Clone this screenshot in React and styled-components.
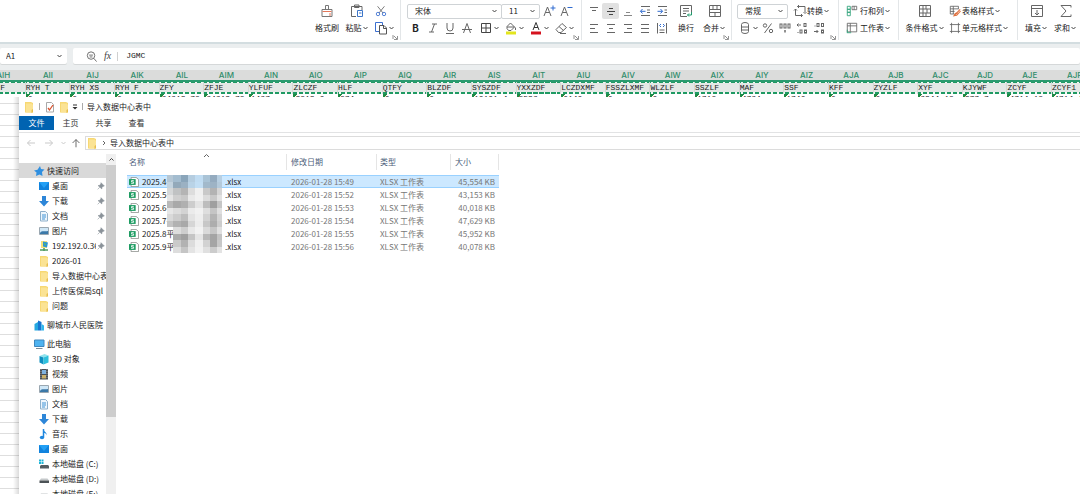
import React, { useState } from "react"
import styled, { createGlobalStyle, css } from "styled-components"

const uiFont = `"Noto Sans CJK SC", "Noto Sans", sans-serif`;

const GlobalStyle = createGlobalStyle`
    * {
        box-sizing: border-box;
    }

    body {
        margin: 0;
        background-color: #fff;
        color: #222;
        font-family: ${uiFont};
        font-size: 8px;
        line-height: 12px;
    }

    button, input, select {
        margin: 0;
        padding: 0;
        border: 0;
        background: transparent;
        color: inherit;
        font: inherit;
    }

    a {
        color: inherit;
        text-decoration: none;
    }

    svg {
        display: block;
        flex: none;
    }
`;

const Page = styled.div`
    height: 100vh;
    display: flex;
    flex-direction: column;
    overflow: hidden;
`;

/* ---------- icons ---------- */

const Line = styled.svg.attrs({ "aria-hidden": true })`
    fill: none;
    stroke: ${props => props.$color || "#666"};
    stroke-width: 1;
`;

const Chevron = () => (
    <Line width="7" height="8" viewBox="0 0 7 8" $color="#444"><path d="M1.5 3l2 2 2-2" /></Line>
);

const icons = {
    painter: <><path d="M2 5.500h10v7H2zM5.500 5.500V1.500h3v4" stroke="#777" /><path d="M2.500 7.500h9" stroke="#e5785a" /><path d="M10 9v3" stroke="#e5785a" /></>,
    paste: <><path d="M6 12.500H1.500v-10H12V6M4.500 1h4.500v2.500H4.500z" stroke="#666" /><path d="M7.500 6.500h5v6h-5z" stroke="#3d76c9" /><path d="M9 9h2.500" stroke="#3d76c9" /></>,
    cut: <><path d="M3 1.500l6.500 8M11 1.500l-6.500 8" stroke="#666" /><circle cx="3.500" cy="10.500" r="2" stroke="#3b6fd0" /><circle cx="10.500" cy="10.500" r="2" stroke="#3b6fd0" /></>,
    copy: <><path d="M5 10.500H1.500v-9h7V4" stroke="#3b6fd0" /><path d="M5.500 4.500H10l2.500 2.500v6h-7zM9.500 4.500v3h3" stroke="#555" /></>,
    fontUp: <><path d="M2 12L5.500 3 9 12M3.500 8.500h4" /><path d="M8.500 4h5M11 1.500v5" stroke="#2f6bd0" /></>,
    fontDown: <><path d="M2 12L5.500 3 9 12M3.500 8.500h4" /><path d="M8.500 3.500h5" stroke="#2f6bd0" /></>,
    italic: <path d="M6 3h5M3 11h5M8.500 3l-3 8" />,
    underline: <path d="M4 2v5a3 3 0 0 0 6 0V2M3 12.500h8" />,
    strike: <path d="M3.500 12L7 2.500l3.500 9.500M2 8.500h10" />,
    border: <path d="M2.500 2.500h9v9h-9zM7 2.500v9M2.500 7h9" stroke="#444" />,
    fill: <><path d="M3 5.500L6.500 2l4 4-3.500 3.500H4.500L3 7.500zM3 6h7.500M11.500 6.500v2.500" /><path d="M2 12h10" stroke="#e3e51d" strokeWidth="3" /></>,
    color: <><path d="M4 9L7 1.500 10 9M5 6.500h4" stroke="#333" /><path d="M2 12h10" stroke="#d5121e" strokeWidth="3" /></>,
    eraser: <path d="M2 8.500L8 2.500l4.500 4-5.500 5H4.500zM5 5.500l4.500 4M6 12.500h6" />,
    top: <path d="M3 3.500h8M5 6.500h4" />,
    middle: <path d="M5 4.500h4M3 7.500h8M5 10.500h4" stroke="#444" />,
    bottom: <path d="M5 8.500h4M3 11.500h8" stroke="#888" />,
    outdent: <><path d="M3 2.500h9M9 6h3M9 8.500h3M3 11.500h9" /><path d="M7.500 7.300H2.500M4.500 5L2.500 7.300l2 2.200" stroke="#2f6bd0" /></>,
    indent: <><path d="M3 2.500h9M9.500 6H12M9.500 8.500H12M3 11.500h9" /><path d="M2.500 7.300h5M5.500 5l2 2.300-2 2.200" stroke="#2f6bd0" /></>,
    left: <path d="M3 3.500h8M3 7.500h5M3 11.500h8" />,
    center: <path d="M3 3.500h8M5 7.500h4M3 11.500h8" />,
    right: <path d="M3 3.500h8M6 7.500h5M3 11.500h8" />,
    justify: <path d="M3 3.500h8M3 7.500h8M3 11.500h8" />,
    spread: <><path d="M2.500 2v10.500M11.500 2v10.500M4.500 11.500h5M4.500 9h5" /><path d="M6 3L4.500 4.500 6 6M8 3l1.500 1.500L8 6" stroke="#2f6bd0" /></>,
    wrap: <><path d="M8 12.500H1.500v-11h11V8M4 4.500h6M4 7h6M4 9.500h3" /><path d="M12.500 8v3H8.500M10 9.500L8.500 11l1.500 1.500" stroke="#1f9a6c" /></>,
    merge: <path d="M1.500 1.500h11v11h-11zM1.500 5.500h11M1.500 8.500h11M5 1.500v4M9 1.500v4M7 8.500v4" />,
    convert: <><path d="M4.500 2.500h7.500V8M9.500 11.500H2.500V5" /><path d="M1 6.500L2.500 5 4 6.500M10.500 8L12 9.500 13.500 8M6 1L4.500 2.500 6 4M8 10l1.500 1.500L8 13" /></>,
    stack: <><path d="M3.500 3.500a3.500 2 0 0 1 7 0v7a3.500 2 0 0 1-7 0zM3.500 6h7M3.500 9h7" /></>,
    percent: <><path d="M10.500 2.500l-7 9.500" /><circle cx="4" cy="4.500" r="1.700" /><circle cx="10" cy="10" r="1.700" /></>,
    thousand: <><rect x="2" y="3" width="2" height="4" /><rect x="6" y="3" width="2" height="4" /><rect x="10" y="3" width="2" height="4" /><path d="M7 9v2.500" stroke="#222" /></>,
    decimalUp: <><path d="M6 4H2M3.500 2.500L2 4l1.500 1.500" /><rect x="9" y="2.500" width="2" height="3" /><rect x="5" y="9" width="2" height="3" /><rect x="9.500" y="9" width="2" height="3" /><path d="M3 11v1" /></>,
    decimalDown: <><rect x="5" y="2.500" width="2" height="3" /><rect x="9.500" y="2.500" width="2" height="3" /><path d="M3 4.500v1M2 10.500h4M4.500 9L6 10.500 4.500 12" /><rect x="9.500" y="9" width="2" height="3" /></>,
    rowCol: <><path d="M1.500 1.500h3.500V5H1.500zM1.500 5h3.500v3.500H1.500zM1.500 8.500h3.500v4H1.500z" stroke="#2ba178" /><path d="M7 1.500h5.500v4H7zM9.500 1.500v4" /></>,
    sheet: <><path d="M1.500 1.500h11v10H1.500zM1.500 4.500h11M5 1.500v10" /><path d="M1 12.500h5M1.500 9v3.500" stroke="#2ba178" /></>,
    condition: <path d="M1.500 1.500h11v11h-11zM1.500 5h11M1.500 9h11M5 1.500v11M9 5v4M8 1.500V5M8 9v3.500" />,
    tableStyle: <><path d="M6 10.500H1.500v-9h9.500V5M1.500 4.500h9M1.500 7.500h5M5 1.500v9" /><path d="M13 5l-5.500 6-1.500 1.500 3-.5 4.500-5M6 12.500c1-4 4-4 3.500-1" stroke="#e0713f" strokeWidth="1.300" /></>,
    cellStyle: <path d="M3 1v12M11 1v12M1 3h12M1 11h12" />,
    fillDown: <path d="M1.500 1.500h11v11h-11zM1.500 4.500h11M7 6v5M5 9l2 2 2-2" />,
    sum: <path d="M12 3.500v-2H2l5 5.500-5 5.500h10v-2" />,
    zoomOut: <><circle cx="6.500" cy="6" r="4" /><path d="M9.500 9l3 3.500M4.500 5.500h4M5 7.500h3" /></>,
    back: <path d="M11 7H3.500M6.500 4l-3 3 3 3" stroke="#c9c9c9" />,
    forward: <path d="M3 7h7.500M7.500 4l3 3-3 3" stroke="#c9c9c9" />,
    up: <path d="M7 12V3M3 7l4-4 4 4" stroke="#555" />,
};

const Icon = ({ name, size = 14 }) => (
    <Line width={size} height={size} viewBox="0 0 14 14">{icons[name]}</Line>
);

const drawings = {
    folder: <><path d="M2 1h6l2 1v9.500H2z" fill="#f7d873" /><path d="M3 2.500h5.500L10 4v7.500H3z" fill="#fbe394" /><path d="M8.500 9v3L10 11V8z" fill="#e7bd4d" /></>,
    check: <><path d="M2.500 1.500h5l2 2v7.500h-7z" fill="#fff" stroke="#a9a9a9" /><path d="M4 7l1.500 2L9 4" fill="none" stroke="#d9532f" strokeWidth="1.300" /></>,
    star: <path d="M7 1l1 3 3.500.5-2.500 2.500.5 4-3-1.500L3 11l.5-3.500L1 5.500l3.500-.8z" fill="#2f8fe0" />,
    desktop: <><path d="M1 2h10v8H1z" fill="#1183dd" /><path d="M1 2h10L6 8z" fill="#23a0f5" /></>,
    download: <path d="M4 1h4v5h3l-5 5.500L1 6h3z" fill="#2d86d8" />,
    doc: <><path d="M2.500 1.500h5l2 2v7.500h-7z" fill="#eef6fc" stroke="#8eb0cb" /><path d="M4 5h4M4 7h4M4 9h3" stroke="#3f93d6" fill="none" /></>,
    picture: <><path d="M1.500 2.500h9v7h-9z" fill="#cfe7f7" stroke="#9aa7b0" /><path d="M2 8c2-3 4-1 8-2v3H2z" fill="#3b78a8" /></>,
    network: <><path d="M3 1h6v7H3z" fill="#f5e27a" /><path d="M5 1.500l5 1-1 5-4-1z" fill="#2a95d5" /><path d="M6 3l2 1-1 2z" fill="#6dc24b" /><path d="M2 10h8M6 8v3" stroke="#4f9b62" strokeWidth="1.500" /></>,
    building: <><path d="M1.500 5L5 3v8.500H1.500z" fill="#25a8e0" /><path d="M5 1.500L8.500 3v8.500H5z" fill="#1775d1" /><path d="M8.500 5L11 6.500v5H8.500z" fill="#2fb7ec" /></>,
    computer: <><path d="M1.500 2h9.500v6.500H1.500z" fill="#4fb3f0" stroke="#3f87bd" /><path d="M3 10.500h6.500" stroke="#7b8b96" /></>,
    cube: <><path d="M1.500 3L6.500 1l4 1.500-5 2z" fill="#8fe3ee" /><path d="M1.500 3l4 1.500v7l-4-2z" fill="#0f8fc0" /><path d="M5.500 4.500l5-2v7l-5 2z" fill="#2fc0dc" /></>,
    video: <><path d="M2 1h8v10.500H2z" fill="#4a4f55" /><path d="M4 2h4v4H4z" fill="#7fb2e0" /><path d="M4 7h4v3.500H4z" fill="#c9b06a" /><path d="M3 1v10.500M9 1v10.500" stroke="#c7c7c7" strokeWidth=".6" strokeDasharray="1 1" /></>,
    music: <><path d="M5.500 1v8" stroke="#1f87df" strokeWidth="1.500" /><path d="M5.500 1c0 3 4 3 3 6.500C8.500 5.500 7 5 5.500 5z" fill="#1f87df" /><ellipse cx="4" cy="9.500" rx="2.200" ry="1.700" fill="#1f87df" /></>,
    systemDisk: <><path d="M2 8l1-1h7l1 1v2.500H2z" fill="#555d62" /><path d="M1 1.500h2v2H1zM3.500 1.500h2v2h-2zM1 4h2v2H1zM3.500 4h2v2h-2z" fill="#1fb5d8" /></>,
    disk: <><path d="M1.500 7.500L3 5.500h6.500l1.500 2z" fill="#c4c8ca" /><path d="M1.500 7.500H11V10H1.500z" fill="#4c5256" /></>,
    pin: <path d="M6 2l4 4-1.500.3L7 8v1.500L2.500 5.500H4L5.800 3.500zM4.500 7.500L2 10" fill="#8a9299" stroke="#8a9299" strokeWidth=".7" />,
    xlsx: <><path d="M2.500.5h6l3 2.500v8.500h-9z" fill="#fff" stroke="#8a8f8c" /><path d="M0 2.500h8v7H0z" fill="#1d9c62" /><path d="M5.700 4.300H3v1.600h2.500v1.700H2.500" fill="none" stroke="#fff" /></>,
};

const Drawing = ({ name, size = 12 }) => (
    <svg aria-hidden="true" width={size} height={size} viewBox="0 0 12 12">{drawings[name]}</svg>
);

/* ---------- ribbon ---------- */

const Ribbon = styled.header`
    flex: none;
    height: 44px;
    display: flex;
    padding-left: 308px;
    background-color: #fff;
    border-bottom: 2px solid #d3dde0;
`;

const Group = styled.section`
    position: relative;
    flex: none;
    display: flex;
    height: 40px;
    padding: 3px ${props => props.$right || 0}px 0 ${props => props.$left || 0}px;
    border-right: 1px solid #e3e6e8;

    &:last-child {
        border-right: 0;
    }
`;

const GroupCorner = styled.svg`
    position: absolute;
    right: 2px;
    bottom: 0;
`;

const Rows = styled.div`
    display: flex;
    flex-direction: column;
    gap: 1px;
`;

const Row = styled.div`
    display: flex;
    align-items: center;
    height: 16px;
`;

const BigButton = styled.button`
    width: ${props => props.$width}px;
    height: 33px;
    display: flex;
    flex-direction: column;
    align-items: center;
    gap: 4px;
    padding-top: 1px;
    white-space: nowrap;
`;

const ToolLabel = styled.span`
    display: flex;
    align-items: center;
`;

const ToolButton = styled.button`
    width: 17px;
    height: 16px;
    display: flex;
    align-items: center;
    justify-content: center;
    font-size: 10px;
    font-weight: bold;
    border-radius: 2px;
    background-color: ${props => props.$active ? "#e1e1e1" : "transparent"};
`;

const MenuButton = styled.button`
    height: 16px;
    display: flex;
    align-items: center;
    gap: ${props => props.$gap || 0}px;
    padding-left: ${props => props.$left || 0}px;
    white-space: nowrap;
`;

const SelectBox = styled.label`
    position: relative;
    width: ${props => props.$width}px;
    height: 15px;
    display: flex;
    align-items: center;
    border: 1px solid #cfd3d6;
    border-radius: 2px;

    & + & {
        margin-left: -1px;
    }

    svg {
        position: absolute;
        right: 3px;
        pointer-events: none;
    }
`;

const Select = styled.select`
    appearance: none;
    width: 100%;
    height: 13px;
    padding-left: 7px;
    outline: none;
`;

const Corner = () => (
    <GroupCorner width="6" height="6" viewBox="0 0 6 6" fill="none" stroke="#777" aria-hidden="true">
        <path d="M1 1v4M2 2l3 3M5.500 2v3.500H2" strokeWidth=".8" />
    </GroupCorner>
);

const Picker = ({ label, width, options }) => {
    const [value, setValue] = useState(options[0]);

    return (
        <SelectBox $width={width}>
            <Select aria-label={label} value={value} onChange={e => setValue(e.target.value)}>
                {options.map(o => <option key={o}>{o}</option>)}
            </Select>
            <Chevron />
        </SelectBox>
    )
};

const Big = ({ icon, text, width, menu }) => (
    <BigButton $width={width}>
        <Icon name={icon} />
        <ToolLabel>{text}{menu && <Chevron />}</ToolLabel>
    </BigButton>
);

const Tools = ({ names, active }) => names.map(n => (
    <ToolButton key={n} aria-label={n} $active={n === active}><Icon name={n} /></ToolButton>
));

const Menu = ({ icon, text, left, gap, size }) => (
    <MenuButton aria-label={text || icon} $left={left} $gap={gap}>
        <Icon name={icon} size={size} />
        <ToolLabel>{text}<Chevron /></ToolLabel>
    </MenuButton>
);

const RibbonBar = () => (
    <Ribbon>
        <Group $left={4} $right={5}>
            <Big icon="painter" text="格式刷" width={30} />
            <Big icon="paste" text="粘贴" width={30} menu />
            <Rows>
                <Row><ToolButton aria-label="剪切"><Icon name="cut" size={12} /></ToolButton></Row>
                <Row><Menu icon="copy" left={2} /></Row>
            </Rows>
            <Corner />
        </Group>
        <Group $left={6} $right={6}>
            <Rows>
                <Row>
                    <Picker label="字体" width={95} options={["宋体", "黑体", "楷体"]} />
                    <Picker label="字号" width={39} options={["11", "12", "14"]} />
                    <ToolButton aria-label="增大字号"><Icon name="fontUp" /></ToolButton>
                    <ToolButton aria-label="减小字号"><Icon name="fontDown" /></ToolButton>
                </Row>
                <Row>
                    <ToolButton aria-label="加粗">B</ToolButton>
                    <Tools names={["italic", "underline", "strike"]} />
                    <Menu icon="border" left={4} />
                    <Menu icon="fill" left={4} />
                    <Menu icon="color" left={4} />
                    <Menu icon="eraser" left={4} />
                </Row>
            </Rows>
            <Corner />
        </Group>
        <Group $left={3} $right={4}>
            <Rows>
                <Row><Tools names={["top", "middle", "bottom", "outdent", "indent"]} active="middle" /></Row>
                <Row><Tools names={["left", "center", "right", "justify", "spread"]} /></Row>
            </Rows>
            <Big icon="wrap" text="换行" width={32} />
            <Big icon="merge" text="合并" width={25} menu />
            <Corner />
        </Group>
        <Group $left={5} $right={8}>
            <Rows>
                <Row>
                    <Picker label="数字格式" width={51} options={["常规", "数值", "货币"]} />
                    <Menu icon="convert" text="转换" left={5} />
                </Row>
                <Row>
                    <Menu icon="stack" left={1} />
                    <Tools names={["percent", "thousand", "decimalUp", "decimalDown"]} />
                </Row>
            </Rows>
            <Corner />
        </Group>
        <Group $left={7} $right={7}>
            <Rows>
                <Row><Menu icon="rowCol" text="行和列" size={12} gap={2} /></Row>
                <Row><Menu icon="sheet" text="工作表" size={12} gap={2} /></Row>
            </Rows>
        </Group>
        <Group $left={6} $right={8}>
            <Big icon="condition" text="条件格式" width={40} menu />
            <Rows>
                <Row><Menu icon="tableStyle" text="表格样式" size={12} gap={1} left={4} /></Row>
                <Row><Menu icon="cellStyle" text="单元格样式" size={12} gap={1} left={4} /></Row>
            </Rows>
        </Group>
        <Group $left={4}>
            <Big icon="fillDown" text="填充" width={29} menu />
            <Big icon="sum" text="求和" width={29} menu />
        </Group>
    </Ribbon>
);

/* ---------- formula bar and sheet ---------- */

const FormulaBar = styled.div`
    flex: none;
    display: flex;
    gap: 6px;
    height: 26px;
    padding: 4px 0 6px;
    background-color: #ebeeef;
`;

const Field = styled.label`
    display: flex;
    align-items: center;
    gap: 6px;
    height: 16px;
    padding: 0 4px;
    background-color: #fff;
    border-radius: 2px;
    box-shadow: 0 1px 0 #d5d8d9;
`;

const NameField = styled(Field)`
    width: 67px;
`;

const ContentField = styled(Field)`
    flex: 1;
    padding-left: 12px;
`;

const FieldInput = styled.input.attrs({ type: "text" })`
    width: 100%;
    min-width: 0;
    padding-left: 2px;
    outline: none;
    font-family: ${props => props.$mono ? `"Liberation Mono", monospace` : "inherit"};
`;

const FieldBar = styled.span`
    width: 1px;
    height: 9px;
    background-color: #d0d0d0;
`;

const Fx = styled.em`
    font: italic 10px/12px "Liberation Serif", serif;
    color: #444;
`;

const SheetTop = styled.div`
    flex: none;
    height: 27px;
    overflow: hidden;
`;

const SheetTable = styled.table`
    width: calc(100% + 36px);
    margin-left: -19px;
    table-layout: fixed;
    border-collapse: separate;
    border-spacing: 0;

    th, td {
        padding: 0;
        white-space: nowrap;
    }
`;

const ColumnHead = styled.th`
    height: 12px;
    background-color: #dbdcdb;
    border-bottom: 2px solid #2a9b70;
    color: #2f8c6a;
    font: 500 8px/10px Inter, sans-serif;
    text-align: center;
`;

const SelectedRow = styled.tr`
    background-color: #e4e8e6;
    background-image:
        repeating-linear-gradient(90deg, #1f9a63 0 4px, #f3f8f5 4px 6px),
        repeating-linear-gradient(90deg, #1f9a63 0 4px, #f3f8f5 4px 6px);
    background-size: 100% 1px, 100% 2px;
    background-position: 0 0, 0 100%;
    background-repeat: no-repeat;
`;

const cellStyles = css`
    padding: 0;
    overflow: hidden;
    color: #222;
    font: 8px/10px "Liberation Mono", monospace;
`;

const Cell = styled.td`
    ${cellStyles};
    height: 12px;
    border-right: 1px solid #d5d9d7;
`;

const ValueCell = styled.td`
    ${cellStyles};
    background: linear-gradient(135deg, #1f8a45 0 3px, transparent 3px);
    text-indent: 2px;
`;

const columns = [
    ["AIH", "RYH_F", ""], ["AII", "RYH_T", "0"], ["AIJ", "RYH_XS", "0"], ["AIK", "RYH_F", "0"],
    ["AIL", "ZFY", "24213.78"], ["AIM", "ZFJE", "24213.78"], ["AIN", "YLFUF", "1427"], ["AIO", "ZLCZF", "3813.6"],
    ["AIP", "HLF", "874"], ["AIQ", "QTFY", "0"], ["AIR", "BLZDF", "0"], ["AIS", "SYSZDF", "10101.4"],
    ["AIT", "YXXZDF", "5532"], ["AIU", "LCZDXMF", "0140"], ["AIV", "FSSZLXMF", "0"], ["AIW", "WLZLF", "0"],
    ["AIX", "SSZLF", "1718"], ["AIY", "MAF", "4724"], ["AIZ", "SSF", "1740"], ["AJA", "KFF", "0"],
    ["AJB", "ZYZLF", "0"], ["AJC", "XYF", "2344.18"], ["AJD", "KJYWF", "377.7"], ["AJE", "ZCYF", "4714.18"],
    ["AJF", "ZCYF1", "4714.18"],
];

const Sheet = () => (
    <SheetTop>
        <SheetTable>
            <thead>
                <tr>{columns.map(c => <ColumnHead key={c[0]}>{c[0]}</ColumnHead>)}</tr>
            </thead>
            <tbody>
                <SelectedRow>{columns.map(c => <Cell key={c[0]}>{c[1].replace("_", " ")}</Cell>)}</SelectedRow>
                <tr>{columns.map(c => <ValueCell key={c[0]}>{c[2]}</ValueCell>)}</tr>
            </tbody>
        </SheetTable>
    </SheetTop>
);

/* ---------- explorer ---------- */

const Workspace = styled.div`
    flex: 1;
    min-height: 0;
    display: flex;
`;

const SheetEdge = styled.div`
    width: 19px;
    background-image:
        linear-gradient(90deg, transparent 13px, rgba(0, 0, 0, 0.14)),
        repeating-linear-gradient(#fff 0 6px, #dedede 6px 7px, #fff 7px 11px);
`;

const Explorer = styled.main`
    flex: 1;
    min-width: 0;
    display: flex;
    flex-direction: column;
    background-color: #fff;
`;

const TitleBar = styled.div`
    flex: none;
    display: flex;
    align-items: center;
    gap: 2px;
    height: 19px;
    padding-left: 4px;
`;

const TitleMark = styled.span`
    width: 1px;
    height: 7px;
    margin: 0 2px;
    background-color: #aaa;
`;

const Tabs = styled.nav`
    flex: none;
    display: flex;
    height: 17px;
    border-bottom: 1px solid #e2e3e4;
`;

const Tab = styled.button`
    width: ${props => props.$active ? 35 : 33}px;
    height: 14px;
    background-color: ${props => props.$active ? "#0063b1" : "transparent"};
    color: ${props => props.$active ? "#fff" : "#333"};
`;

const AddressRow = styled.div`
    flex: none;
    display: flex;
    align-items: center;
    gap: 4px;
    height: 20px;
    padding-left: 5px;
`;

const NavButton = styled.button`
    width: ${props => props.$width || 14}px;
    height: 14px;
    display: flex;
    align-items: center;
    justify-content: center;
`;

const Address = styled.div`
    flex: 1;
    display: flex;
    align-items: center;
    gap: 2px;
    height: 14px;
    border: 1px solid #dcdcdc;
    border-right: 0;
`;

const Body = styled.div`
    flex: 1;
    min-height: 0;
    display: flex;
`;

const Sidebar = styled.nav`
    width: 87px;
    padding-top: 10px;
    overflow: hidden;
`;

const NavGroup = styled.ul`
    margin: 0 0 4px;
    padding: 0;
    list-style: none;
`;

const NavItem = styled.li`
    height: 15px;
    padding-left: ${props => props.$top ? 14 : 19}px;
    background-color: ${props => props.$active ? "#d9d9d9" : "transparent"};
`;

const NavLink = styled.a`
    display: flex;
    align-items: center;
    height: 15px;
    white-space: nowrap;
`;

const NavText = styled.span`
    flex: 1;
    min-width: 0;
    margin-left: 2px;
    overflow: hidden;
`;

const Scroll = styled.div`
    width: 10px;
    display: flex;
    flex-direction: column;
    margin-top: 1px;
    background-color: #f0f0f0;
`;

const ScrollButton = styled.button`
    height: 11px;
    display: flex;
    align-items: center;
    justify-content: center;
`;

const ScrollThumb = styled.div`
    height: 74%;
    background-color: #cdcdcd;
`;

const Files = styled.div`
    flex: 1;
    padding: 1px 0 0 11px;
`;

const FileTable = styled.table`
    width: 372px;
    table-layout: fixed;
    border-collapse: separate;
    border-spacing: 0;
`;

const FileHead = styled.th`
    position: relative;
    width: ${props => props.$width}px;
    height: 21px;
    padding: 0 0 5px;
    color: #4c607a;
    font-weight: normal;
    text-align: left;
`;

const HeadText = styled.div`
    padding-left: ${props => props.$left}px;
    border-right: 1px solid #e5e5e5;
    line-height: 16px;
`;

const SortMark = styled(Line)`
    position: absolute;
    top: -1px;
    left: 76px;
`;

const FileCell = styled.td`
    height: 13px;
    padding: 0 4px 0 ${props => props.$left || 0}px;
    color: ${props => props.$name ? "#222" : "#777"};
    text-align: ${props => props.$end ? "right" : "left"};
    line-height: 11px;
    white-space: nowrap;
    border: 0 solid #99d1ff;
`;

const FileRow = styled.tr`
    background-color: ${props => props.$active ? "#cce8ff" : "transparent"};

    ${FileCell} {
        border-top-width: ${props => props.$active ? 1 : 0}px;
        border-bottom-width: ${props => props.$active ? 1 : 0}px;
    }
`;

const FileName = styled.span`
    display: flex;
    align-items: center;
    height: 11px;
`;

const NameStart = styled.span`
    position: relative;
    width: 86px;
    padding-left: 3px;
`;

const Mosaic = styled.svg`
    position: absolute;
    top: -1px;
    left: 28px;
`;

const quickItems = [
    ["desktop", "桌面", true], ["download", "下载", true], ["doc", "文档", true], ["picture", "图片", true],
    ["network", "192.192.0.36", true], ["folder", "2026-01"], ["folder", "导入数据中心表中"],
    ["folder", "上传医保局sql"], ["folder", "问题"],
];

const computerItems = [
    ["cube", "3D 对象"], ["video", "视频"], ["picture", "图片"], ["doc", "文档"], ["download", "下载"],
    ["music", "音乐"], ["desktop", "桌面"], ["systemDisk", "本地磁盘 (C:)"], ["disk", "本地磁盘 (D:)"],
    ["disk", "本地磁盘 (E:)"],
];

// two lines of shades for each file, every shade is one block of the mosaic
const files = [
    ["2025.4平", "15:49", "45,554 KB", ["#b4c6d4", "#a3bccf", "#8aa5ba", "#b5cde0", "#c0dcf2", "#a9c3d6", "#94abbf", "#b7cfe2"], ["#c3d3df", "#93a9ba", "#9bb1c3", "#b9d3e7", "#c2def4", "#a2b9cb", "#9db3c5", "#b4cadb"]],
    ["2025.5平", "15:52", "43,153 KB", ["#d5d7d8", "#c0c2c3", "#b4b4b4", "#dddddd", "#f0f0f0", "#c9c9c9", "#b3b3b3", "#d5d5d5"], ["#e5e5e5", "#cfcfcf", "#c8c8c8", "#e9e9e9", "#f1f1f1", "#dcdcdc", "#c9c9c9", "#e2e2e2"]],
    ["2025.6平", "15:53", "40,018 KB", ["#b9b9b9", "#a9a9a9", "#b0b0b0", "#cdcdcd", "#e4e4e4", "#bdbdbd", "#9f9f9f", "#c6c6c6"], ["#e6e6e6", "#dcdcdc", "#d3d3d3", "#ebebeb", "#f1f1f1", "#dedede", "#c5c5c5", "#dfdfdf"]],
    ["2025.7平", "15:54", "47,629 KB", ["#d9d9d9", "#cccccc", "#bdbdbd", "#e3e3e3", "#eeeeee", "#d2d2d2", "#b4b4b4", "#d3d3d3"], ["#c4c4c4", "#b2b2b2", "#a9a9a9", "#d6d6d6", "#ececec", "#c7c7c7", "#adadad", "#cdcdcd"]],
    ["2025.8平", "15:55", "45,952 KB", ["none", "#dddddd", "#cecece", "#e8e8e8", "#f2f2f2", "#dadada", "#c6c6c6", "#e0e0e0"], ["none", "#ababab", "#a0a0a0", "#c5c5c5", "#e5e5e5", "#b8b8b8", "#a4a4a4", "#c3c3c3"]],
    ["2025.9平", "15:56", "40,078 KB", ["none", "#cacaca", "#b2b2b2", "#dcdcdc", "#f0f0f0", "#d2d2d2", "#a5a5a5", "#c8c8c8"], ["none", "#dddddd", "#c5c5c5", "#e4e4e4", "#f2f2f2", "#e0e0e0", "#cccccc", "#e3e3e3"]],
];

const xs = [0, 6, 14, 21, 28, 36, 43, 50, 55];

const Blocks = ({ rows }) => (
    <Mosaic width="55" height="13" viewBox="0 0 55 13" aria-hidden="true">
        {rows.map((row, y) => row.map((shade, x) => (
            <rect key={`${x}-${y}`} x={xs[x]} y={y * 7} width={xs[x + 1] - xs[x]} height="7" fill={shade} />
        )))}
    </Mosaic>
);

const NavEntry = ({ icon, text, pinned, top, active }) => (
    <NavItem $top={top} $active={active}>
        <NavLink href="#">
            <Drawing name={icon} />
            <NavText>{text}</NavText>
            {pinned && <Drawing name="pin" size={10} />}
        </NavLink>
    </NavItem>
);

const FileList = () => (
    <Files>
        <FileTable>
            <thead>
                <tr>
                    <FileHead $width={160}>
                        <HeadText $left={2}>名称</HeadText>
                        <SortMark width="7" height="5" viewBox="0 0 7 5"><path d="M1 4l2.500-2.500L6 4" /></SortMark>
                    </FileHead>
                    <FileHead $width={90}><HeadText $left={4}>修改日期</HeadText></FileHead>
                    <FileHead $width={74}><HeadText $left={3}>类型</HeadText></FileHead>
                    <FileHead $width={48}><HeadText $left={4}>大小</HeadText></FileHead>
                </tr>
            </thead>
            <tbody>
                {files.map(([name, time, size, upper, lower], i) => (
                    <FileRow key={name} $active={i === 0}>
                        <FileCell $name $left={2}>
                            <FileName>
                                <Drawing name="xlsx" size={10} />
                                <NameStart>{name}<Blocks rows={[upper, lower]} /></NameStart>
                                .xlsx
                            </FileName>
                        </FileCell>
                        <FileCell $left={4}>2026-01-28 {time}</FileCell>
                        <FileCell $left={3}>XLSX 工作表</FileCell>
                        <FileCell $end>{size}</FileCell>
                    </FileRow>
                ))}
            </tbody>
        </FileTable>
    </Files>
);

const ExplorerWindow = () => (
    <Explorer>
        <TitleBar>
            <Drawing name="folder" />
            <TitleMark />
            <Drawing name="check" />
            <Drawing name="folder" />
            <svg width="6" height="8" viewBox="0 0 6 8" fill="#333" aria-hidden="true"><path d="M1 1.500h4v1H1zM.5 4h5L3 6.500z" /></svg>
            <TitleMark />
            导入数据中心表中
        </TitleBar>
        <Tabs>
            {["文件", "主页", "共享", "查看"].map((t, i) => <Tab key={t} $active={i === 0}>{t}</Tab>)}
        </Tabs>
        <AddressRow>
            <NavButton aria-label="后退"><Icon name="back" /></NavButton>
            <NavButton aria-label="前进"><Icon name="forward" /></NavButton>
            <NavButton aria-label="最近" $width={7}>
                <Line width="7" height="8" viewBox="0 0 7 8" $color="#ccc"><path d="M1.500 3l2 2 2-2" /></Line>
            </NavButton>
            <NavButton aria-label="向上" $width={10}><Icon name="up" size={12} /></NavButton>
            <Address>
                <Drawing name="folder" />
                <Line width="8" height="8" viewBox="0 0 8 8"><path d="M3 2l2 2-2 2" /></Line>
                导入数据中心表中
            </Address>
        </AddressRow>
        <Body>
            <Sidebar>
                <NavGroup>
                    <NavEntry icon="star" text="快速访问" top active />
                    {quickItems.map(([icon, text, pinned]) => <NavEntry key={text} icon={icon} text={text} pinned={pinned} />)}
                </NavGroup>
                <NavGroup>
                    <NavEntry icon="building" text="聊城市人民医院" top />
                </NavGroup>
                <NavGroup>
                    <NavEntry icon="computer" text="此电脑" top />
                    {computerItems.map(([icon, text]) => <NavEntry key={text} icon={icon} text={text} />)}
                </NavGroup>
            </Sidebar>
            <Scroll>
                <ScrollButton aria-label="向上滚动">
                    <Line width="7" height="7" viewBox="0 0 7 7" $color="#444"><path d="M1.500 4.500l2-2 2 2" /></Line>
                </ScrollButton>
                <ScrollThumb />
            </Scroll>
            <FileList />
        </Body>
    </Explorer>
);

const App = () => {
    const [content, setContent] = useState("JGMC");
    const [cell, setCell] = useState("A1");

    return (
        <Page>
            <GlobalStyle />
            <RibbonBar />
            <FormulaBar>
                <NameField>
                    <FieldInput aria-label="名称框" value={cell} onChange={e => setCell(e.target.value)} />
                    <Chevron />
                </NameField>
                <ContentField>
                    <Icon name="zoomOut" size={13} />
                    <Fx>fx</Fx>
                    <FieldBar />
                    <FieldInput $mono aria-label="编辑栏" value={content} onChange={e => setContent(e.target.value)} />
                </ContentField>
            </FormulaBar>
            <Sheet />
            <Workspace>
                <SheetEdge />
                <ExplorerWindow />
            </Workspace>
        </Page>
    )
};

export default App;
